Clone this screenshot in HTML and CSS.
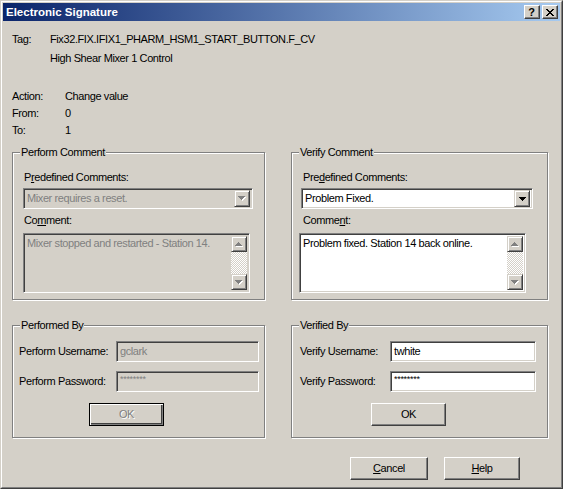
FILE: index.html
```html
<!DOCTYPE html>
<html>
<head>
<meta charset="utf-8">
<title>Electronic Signature</title>
<link rel="stylesheet" href="styles.css">
</head>
<body>
<div class="window">
  <div class="frame">
    <div class="titlebar">
      <span class="title">Electronic Signature</span>
      <div class="tbtns">
        <span class="tbtn tb-help">?</span>
        <span class="tbtn tb-close"><svg width="8" height="7" viewBox="0 0 8 7" shape-rendering="crispEdges"><path d="M0 0h2v1h-2zM6 0h2v1h-2zM1 1h2v1h-2zM5 1h2v1h-2zM2 2h4v1h-4zM3 3h2v1h-2zM2 4h4v1h-4zM1 5h2v1h-2zM5 5h2v1h-2zM0 6h2v1h-2zM6 6h2v1h-2z" fill="#000"/></svg></span>
      </div>
    </div>
    <div class="content">
      <div class="info">
        <div class="row r-tag"><span class="k k-tag">Tag:</span><span>Fix32.FIX.IFIX1_PHARM_HSM1_START_BUTTON.F_CV</span></div>
        <div class="row r-desc">High Shear Mixer 1 Control</div>
        <div class="row r-action"><span class="k k-act">Action:</span><span>Change value</span></div>
        <div class="row r-small"><span class="k k-act">From:</span><span>0</span></div>
        <div class="row r-small"><span class="k k-act">To:</span><span>1</span></div>
      </div>

      <div class="groups">
        <div class="group comment left">
          <span class="gtitle">Perform Comment</span>
          <span class="lbl lbl-pre">P<u>r</u>edefined Comments:</span>
          <div class="combo disabled">
            <span class="combo-text">Mixer requires a reset.</span>
            <span class="sbtn"><svg width="8" height="5" viewBox="0 0 8 5" shape-rendering="crispEdges"><path d="M1 1h7v1h-7zM2 2h5v1h-5zM3 3h3v1h-3zM4 4h1v1h-1z" fill="#fff"/><path d="M0 0h7v1h-7zM1 1h5v1h-5zM2 2h3v1h-3zM3 3h1v1h-1z" fill="#808080"/></svg></span>
          </div>
          <span class="lbl lbl-com">Co<u>m</u>ment:</span>
          <div class="memo disabled">
            <div class="memo-text">Mixer stopped and restarted - Station 14.</div>
            <div class="vscroll">
              <span class="sbtn"><svg width="8" height="5" viewBox="0 0 8 5" shape-rendering="crispEdges"><path d="M4 1h1v1h-1zM3 2h3v1h-3zM2 3h5v1h-5zM1 4h7v1h-7z" fill="#fff"/><path d="M3 0h1v1h-1zM2 1h3v1h-3zM1 2h5v1h-5zM0 3h7v1h-7z" fill="#808080"/></svg></span>
              <span class="track"></span>
              <span class="sbtn"><svg width="8" height="5" viewBox="0 0 8 5" shape-rendering="crispEdges"><path d="M1 1h7v1h-7zM2 2h5v1h-5zM3 3h3v1h-3zM4 4h1v1h-1z" fill="#fff"/><path d="M0 0h7v1h-7zM1 1h5v1h-5zM2 2h3v1h-3zM3 3h1v1h-1z" fill="#808080"/></svg></span>
            </div>
          </div>
        </div>

        <div class="group comment right">
          <span class="gtitle">Verify Comment</span>
          <span class="lbl lbl-pre">Pre<u>d</u>efined Comments:</span>
          <div class="combo">
            <span class="combo-text">Problem Fixed.</span>
            <span class="sbtn"><svg width="7" height="4" viewBox="0 0 7 4" shape-rendering="crispEdges"><path d="M0 0h7v1h-7zM1 1h5v1h-5zM2 2h3v1h-3zM3 3h1v1h-1z" fill="#000"/></svg></span>
          </div>
          <span class="lbl lbl-com">Comme<u>n</u>t:</span>
          <div class="memo">
            <div class="memo-text">Problem fixed. Station 14 back online.</div>
            <div class="vscroll">
              <span class="sbtn"><svg width="8" height="5" viewBox="0 0 8 5" shape-rendering="crispEdges"><path d="M4 1h1v1h-1zM3 2h3v1h-3zM2 3h5v1h-5zM1 4h7v1h-7z" fill="#fff"/><path d="M3 0h1v1h-1zM2 1h3v1h-3zM1 2h5v1h-5zM0 3h7v1h-7z" fill="#808080"/></svg></span>
              <span class="track"></span>
              <span class="sbtn"><svg width="8" height="5" viewBox="0 0 8 5" shape-rendering="crispEdges"><path d="M1 1h7v1h-7zM2 2h5v1h-5zM3 3h3v1h-3zM4 4h1v1h-1z" fill="#fff"/><path d="M0 0h7v1h-7zM1 1h5v1h-5zM2 2h3v1h-3zM3 3h1v1h-1z" fill="#808080"/></svg></span>
            </div>
          </div>
        </div>

        <div class="group by left">
          <span class="gtitle">Performed By</span>
          <div class="frow">
            <span class="flbl">Perform Username:</span>
            <span class="field disabled">gclark</span>
          </div>
          <div class="frow">
            <span class="flbl">Perform Password:</span>
            <span class="field disabled pw">********</span>
          </div>
          <span class="btn ok default disabled">OK</span>
        </div>

        <div class="group by right">
          <span class="gtitle">Verified By</span>
          <div class="frow">
            <span class="flbl">Verify Username:</span>
            <span class="field">twhite</span>
          </div>
          <div class="frow">
            <span class="flbl">Verify Password:</span>
            <span class="field pw">********</span>
          </div>
          <span class="btn ok">OK</span>
        </div>
      </div>

      <div class="footer">
        <span class="btn b-cancel"><u>C</u>ancel</span>
        <span class="btn b-help"><u>H</u>elp</span>
      </div>
    </div>
  </div>
</div>
</body>
</html>
```

FILE: styles.css
```css
* { box-sizing: border-box; }

body {
  margin: 0;
  background: #D4D0C8;
  font-family: "Liberation Sans", Arial, sans-serif;
  font-size: 11px;
  line-height: 13px;
  letter-spacing: -0.4px;
  color: #000;
}

u { text-decoration: underline; text-underline-offset: 1px; }

.window {
  width: 563px;
  height: 489px;
  border: 1px solid;
  border-color: #D4D0C8 #404040 #404040 #D4D0C8;
  background: #D4D0C8;
}

.frame {
  height: 100%;
  border: 1px solid;
  border-color: #fff #808080 #808080 #fff;
  padding: 1px;
  display: flex;
  flex-direction: column;
}

.titlebar {
  flex: none;
  height: 18px;
  display: flex;
  align-items: center;
  justify-content: space-between;
  padding: 0 2px 0 3px;
  background: linear-gradient(to right, #0A246A, #A6CAF0);
}

.title {
  color: #fff;
  font-weight: bold;
  font-size: 11.5px;
  letter-spacing: 0;
}

.tbtns { display: flex; gap: 2px; }

.tbtn {
  width: 16px;
  height: 14px;
  background: #D4D0C8;
  border: 1px solid;
  border-color: #fff #404040 #404040 #fff;
  box-shadow: inset -1px -1px #808080;
  display: flex;
  align-items: center;
  justify-content: center;
  font-weight: bold;
  font-size: 11px;
  letter-spacing: 0;
  line-height: 11px;
}
.tb-help { padding-right: 1px; }

.content { flex: 1; }

/* header info */
.info { padding-left: 9px; }
.row { display: flex; height: 13px; }
.r-tag { margin-top: 12px; }
.r-desc { margin-top: 6px; padding-left: 38px; }
.r-action { margin-top: 25px; }
.r-small { margin-top: 4px; }
.k-tag { width: 38px; }
.k-act { width: 53px; }

/* group boxes */
.groups {
  margin-top: 15px;
  padding-left: 9px;
  display: grid;
  grid-template-columns: 253px 257px;
  grid-template-rows: 148px 113px;
  column-gap: 26px;
  row-gap: 25px;
}

.group {
  border: 1px solid #808080;
  box-shadow: inset 1px 1px #fff, 1px 1px #fff;
  display: flex;
  flex-direction: column;
  align-items: flex-start;
}

.gtitle {
  margin: -7px 0 0 7px;
  padding: 0 1px;
  height: 13px;
  background: #D4D0C8;
}

.lbl { height: 13px; margin-left: 11px; }
.lbl-pre { margin-top: 12px; }
.lbl-com { margin-top: 5px; }

/* sunken controls */
.combo, .memo, .field {
  border: 1px solid;
  border-color: #808080 #fff #fff #808080;
  box-shadow: inset 1px 1px #404040, inset -1px -1px #D4D0C8;
  background: #fff;
  padding: 2px;
}
.combo.disabled, .memo.disabled, .field.disabled { background: #D4D0C8; color: #808080; }

.combo {
  margin-top: 4px;
  height: 21px;
  display: flex;
  align-items: center;
  justify-content: space-between;
}
.combo-text { padding-left: 1px; }
.left .combo { margin-left: 10px; width: 230px; }
.right .combo { margin-left: 9px; width: 232px; }

.sbtn {
  flex: none;
  width: 16px;
  height: 17px;
  background: #D4D0C8;
  border: 1px solid;
  border-color: #D4D0C8 #404040 #404040 #D4D0C8;
  box-shadow: inset 1px 1px #fff, inset -1px -1px #808080;
  display: flex;
  align-items: center;
  justify-content: center;
}
.sbtn svg { display: block; }

.memo {
  margin-top: 6px;
  height: 60px;
  width: 227px;
  display: flex;
  justify-content: space-between;
}
.left .memo { margin-left: 10px; }
.right .memo { margin-left: 7px; }
.memo-text { padding: 1px 1px; }

.vscroll {
  flex: none;
  width: 16px;
  display: flex;
  flex-direction: column;
}
.vscroll .sbtn { height: 16px; }
.track {
  flex: 1;
  background: repeating-conic-gradient(#fff 0 25%, #D4D0C8 0 50%) 0 0 / 2px 2px;
}

/* user rows */
.frow { display: flex; align-items: center; height: 21px; margin-top: 9px; }
.left .frow { margin-left: 6px; }
.right .frow { margin-left: 8px; }
.left .flbl { width: 97px; }
.right .flbl { width: 90px; }
.field { height: 21px; padding: 2px 3px; line-height: 15px; }
.left .field { width: 143px; }
.right .field { width: 146px; }
.field.pw { font-size: 9px; letter-spacing: -0.3px; line-height: 11px; }

/* buttons */
.btn {
  display: flex;
  align-items: center;
  justify-content: center;
  height: 23px;
  width: 75px;
  background: #D4D0C8;
  border: 1px solid;
  border-color: #fff #404040 #404040 #fff;
  box-shadow: inset -1px -1px #808080;
}
.btn.default {
  border-color: #000;
  box-shadow: inset 1px 1px #fff, inset -1px -1px #808080, inset -2px -2px #404040;
}
.btn.disabled { color: #808080; text-shadow: 1px 1px #fff; }
.ok { margin-top: 11px; }
.left .ok { margin-left: 76px; }
.right .ok { margin-left: 79px; }

.footer {
  display: flex;
  justify-content: flex-end;
  gap: 16px;
  margin-top: 19px;
  padding-right: 40px;
}
.b-cancel { width: 78px; }
.b-help { width: 76px; }
```
